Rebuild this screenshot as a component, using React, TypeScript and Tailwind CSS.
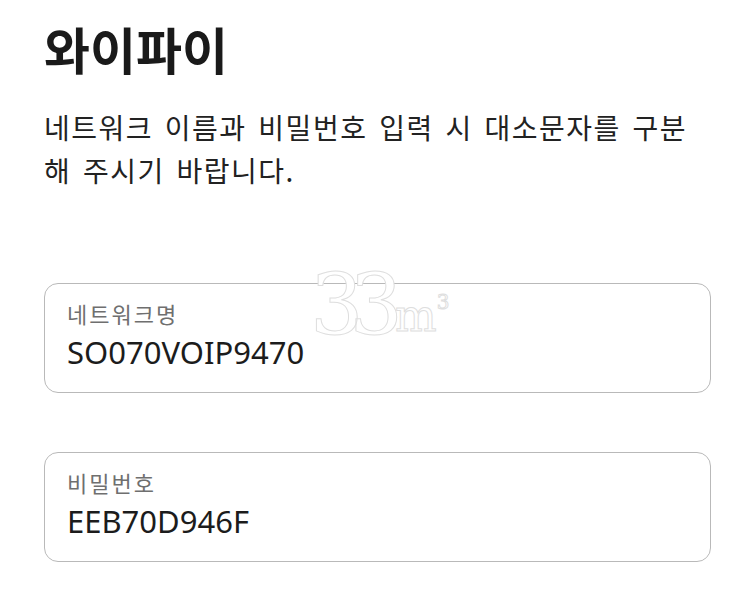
import React from "react";

const ko = { fontFamily: '"Noto Sans CJK KR", "Noto Sans", sans-serif' };
const lat = { fontFamily: '"Noto Sans", "Noto Sans CJK KR", sans-serif' };

function Field({ label, value }: { label: string; value: string }) {
  return (
    <div className="h-[110px] rounded-[14px] border-[1.5px] border-[#b9b9b9] bg-white pl-[22px] pt-[15px]">
      <div className="text-[22px] leading-[28px] tracking-[2px] text-[#6f6f6f]" style={ko}>
        {label}
      </div>
      <div className="mt-[4px] text-[31px] leading-[42px] text-[#1c1c1c]" style={lat}>
        {value}
      </div>
    </div>
  );
}

export default function App() {
  return (
    <div className="relative h-[600px] w-[756px] overflow-hidden bg-white pl-[44px] pr-[30px]" style={ko}>
      <h1 className="pt-[13px] text-[50px] font-bold leading-[70px] text-[#1a1a1a]">와이파이</h1>
      <p className="mt-[23px] text-[28px] leading-[43px] tracking-[1.5px] [word-spacing:4px] text-[#222]">
        네트워크 이름과 비밀번호 입력 시 대소문자를 구분
        <br />해 주시기 바랍니다.
      </p>
      <div className="mt-[91px] mr-[15px] flex flex-col gap-[59px]">
        <Field label="네트워크명" value="SO070VOIP9470" />
        <Field label="비밀번호" value="EEB70D946F" />
      </div>
      <div
        className="pointer-events-none absolute left-[310px] top-[260px] flex items-end text-white [-webkit-text-stroke:1px_#dedede]"
        style={{ fontFamily: '"DejaVu Serif", serif' }}
      >
        <span className="text-[84px] leading-[90px] tracking-[-14px]">33</span>
        <span className="mb-[12px] ml-[6px] text-[44px] leading-[44px]">m</span>
        <span className="mb-[38px] text-[20px] leading-[20px]">3</span>
      </div>
    </div>
  );
}
